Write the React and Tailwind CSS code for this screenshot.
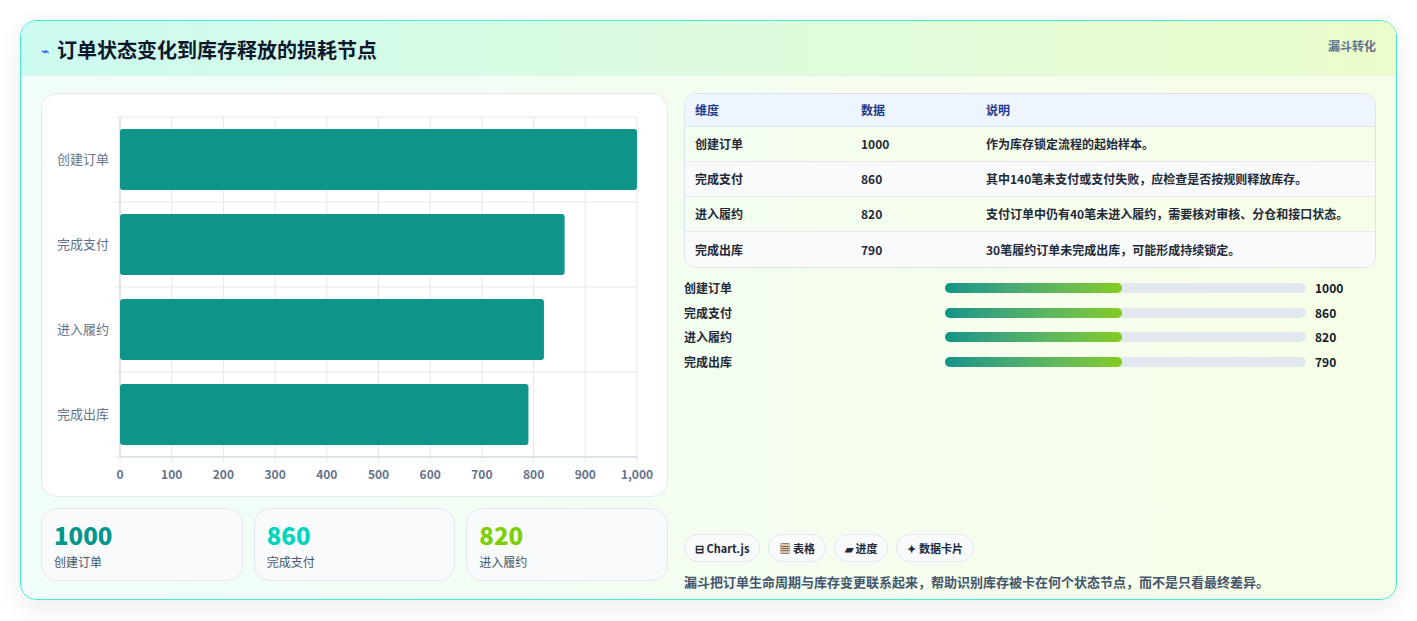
import React from 'react';

const rows = [
  { name: '创建订单', value: 1000, note: '作为库存锁定流程的起始样本。' },
  { name: '完成支付', value: 860, note: '其中140笔未支付或支付失败，应检查是否按规则释放库存。' },
  { name: '进入履约', value: 820, note: '支付订单中仍有40笔未进入履约，需要核对审核、分仓和接口状态。' },
  { name: '完成出库', value: 790, note: '30笔履约订单未完成出库，可能形成持续锁定。' },
];

const FONT = { fontFamily: '"Noto Sans CJK SC", "Noto Sans", sans-serif' };

const Chart = () => {
  const left = 78, right = 595, top = 23, bottom = 363;
  const w = right - left;
  const ticks = [0, 100, 200, 300, 400, 500, 600, 700, 800, 900, 1000];
  return (
    <svg width="627" height="402" style={FONT}>
      {ticks.map((t) => {
        const x = left + (w * t) / 1000;
        return (
          <g key={t}>
            <line x1={x} y1={top} x2={x} y2={bottom + 5} stroke="#e5e7eb" />
            <text x={x} y={385} fontSize="12" fill="#64748b" textAnchor="middle" fontWeight="600">
              {t === 1000 ? '1,000' : t}
            </text>
          </g>
        );
      })}
      {[0, 1, 2, 3, 4].map((i) => (
        <line key={i} x1={left - 5} y1={top + i * 85} x2={right} y2={top + i * 85} stroke="#e5e7eb" />
      ))}
      <line x1={left} y1={top} x2={left} y2={bottom} stroke="#cbd5e1" />
      <line x1={left} y1={bottom} x2={right} y2={bottom} stroke="#cbd5e1" />
      {rows.map((r, i) => {
        const y = top + i * 85 + 12;
        return (
          <g key={r.name}>
            <rect x={left} y={y} width={(w * r.value) / 1000} height={61} rx="3" fill="#0e9488" />
            <text x={67} y={y + 35} fontSize="13" fill="#64748b" textAnchor="end">{r.name}</text>
          </g>
        );
      })}
    </svg>
  );
};

const App = () => {
  return (
    <div className="w-[1417px] h-[621px] bg-white pt-5 px-5" style={FONT}>
      <div className="h-[580px] rounded-2xl border border-teal-300 overflow-hidden shadow-[0_8px_24px_rgba(15,23,42,0.08)] bg-gradient-to-r from-[#f0fdfa] to-[#f7fee7] flex flex-col">
        <div className="h-[55px] shrink-0 flex items-start justify-between px-5 bg-gradient-to-r from-[#ccfbf1] to-[#ecfccb] border-b border-[#e2f3ec]">
          <div className="flex items-center gap-2 mt-[14px]">
            <span className="text-blue-600 text-sm">⌁</span>
            <h1 className="text-[20px] font-bold text-[#0f172a]">订单状态变化到库存释放的损耗节点</h1>
          </div>
          <span className="mt-[16px] text-[12px] font-bold text-slate-500">漏斗转化</span>
        </div>
        <div className="flex gap-4 px-5 pt-[17px]">
          <div className="w-[627px] shrink-0 flex flex-col gap-[11px]">
            <div className="h-[404px] rounded-2xl bg-white border border-[#e5e7eb]">
              <Chart />
            </div>
            <div className="grid grid-cols-3 gap-[11px]">
              {[
                ['1000', '创建订单', 'text-teal-600'],
                ['860', '完成支付', 'text-teal-400'],
                ['820', '进入履约', 'text-lime-500'],
              ].map(([v, l, c]) => (
                <div key={l} className="h-[73px] rounded-2xl bg-[#f8fafc] border border-[#e2e8f0] px-3 pt-[10px]">
                  <div className={`text-[24px] font-extrabold leading-8 ${c}`}>{v}</div>
                  <div className="text-[12px] text-slate-600 mt-[2px]">{l}</div>
                </div>
              ))}
            </div>
          </div>
          <div className="flex-1 flex flex-col">
            <div className="rounded-xl border border-[#dbe3ee] overflow-hidden text-[12px] font-semibold">
              <div className="grid grid-cols-[166px_125px_1fr] h-[33px] items-center bg-[#eef5fe] text-[#1e3a8a] px-[10px] border-b border-[#dbe3ee]">
                <span>维度</span><span>数据</span><span>说明</span>
              </div>
              {rows.map((r, i) => (
                <div key={r.name} className={`grid grid-cols-[166px_125px_1fr] h-[35px] items-center px-[10px] text-[#1f2937] ${i < 3 ? 'border-b border-[#e5eaf0]' : ''} ${i % 2 ? 'bg-[#f8fafc]' : ''}`}>
                  <span>{r.name}</span><span>{r.value}</span><span>{r.note}</span>
                </div>
              ))}
            </div>
            <div className="mt-[8px] flex flex-col">
              {rows.map((r) => (
                <div key={r.name} className="h-[24.5px] flex items-center text-[12px] font-semibold text-[#1f2937]">
                  <span className="w-[261px]">{r.name}</span>
                  <div className="w-[361px] h-[10px] rounded-full bg-[#e2e8f0]">
                    <div className="w-[177px] h-full rounded-full bg-gradient-to-r from-[#0d9488] to-[#84cc16]" />
                  </div>
                  <span className="ml-[9px] font-bold text-[#111827]">{r.value}</span>
                </div>
              ))}
            </div>
            <div className="flex-1" />
            <div className="flex gap-2 mt-[160px] text-[11px] font-bold text-[#1f2937]">
              {['⊟ Chart.js', '▦ 表格', '▰ 进度', '✦ 数据卡片'].map((t) => (
                <span key={t} className="h-[28px] px-[10px] flex items-center rounded-full bg-[#f8fafc] border border-[#e2e8f0]">{t}</span>
              ))}
            </div>
            <p className="mt-[10px] text-[13px] font-semibold text-slate-600">漏斗把订单生命周期与库存变更联系起来，帮助识别库存被卡在何个状态节点，而不是只看最终差异。</p>
          </div>
        </div>
      </div>
    </div>
  );
};

export default App;
